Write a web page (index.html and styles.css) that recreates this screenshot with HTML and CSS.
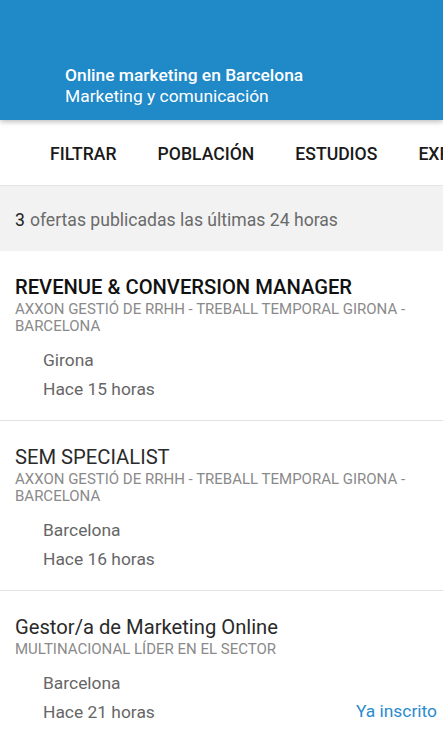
FILE: index.html
```html
<!DOCTYPE html>
<html lang="es">
<head>
  <meta charset="UTF-8">
  <meta name="viewport" content="width=device-width, initial-scale=1.0">
  <title>Ofertas</title>
  <link rel="stylesheet" href="styles.css">
</head>
<body>

<header class="top-bar">
  <div class="top-title">Online marketing en Barcelona</div>
  <div class="top-subtitle">Marketing y comunicación</div>
</header>

<nav class="tabs">
  <span class="tab">FILTRAR</span>
  <span class="tab">POBLACIÓN</span>
  <span class="tab">ESTUDIOS</span>
  <span class="tab">EXPERIENCIA</span>
</nav>

<div class="summary"><b>3</b> ofertas publicadas las últimas 24 horas</div>

<ul class="offers">
  <li class="offer">
    <div class="offer-title strong">REVENUE &amp; CONVERSION MANAGER</div>
    <div class="company">AXXON GESTIÓ DE RRHH - TREBALL TEMPORAL GIRONA - BARCELONA</div>
    <div class="meta">
      <div class="meta-line">Girona</div>
      <div class="meta-line">Hace 15 horas</div>
    </div>
  </li>
  <li class="offer">
    <div class="offer-title">SEM SPECIALIST</div>
    <div class="company">AXXON GESTIÓ DE RRHH - TREBALL TEMPORAL GIRONA - BARCELONA</div>
    <div class="meta">
      <div class="meta-line">Barcelona</div>
      <div class="meta-line">Hace 16 horas</div>
    </div>
  </li>
  <li class="offer">
    <div class="offer-title">Gestor/a de Marketing Online</div>
    <div class="company">MULTINACIONAL LÍDER EN EL SECTOR</div>
    <div class="meta">
      <div class="meta-line">Barcelona</div>
      <div class="meta-line with-status">Hace 21 horas <span class="status">Ya inscrito</span></div>
    </div>
  </li>
</ul>

</body>
</html>
```

FILE: styles.css
```css
* {
  box-sizing: border-box;
  margin: 0;
  padding: 0;
}

html, body {
  width: 100%;
  height: 100%;
  overflow: hidden;
  font-family: Roboto, "Liberation Sans", Arial, sans-serif;
  background: #fff;
  color: #222;
}

.top-bar {
  height: 120px;
  background: #2089c8;
  color: #fff;
  padding: 0 0 13px 65px;
  display: flex;
  flex-direction: column;
  justify-content: flex-end;
  position: relative;
  z-index: 2;
  box-shadow: 0 2px 5px rgba(0, 0, 0, 0.25);
}

.top-title {
  font-size: 17.4px;
  font-weight: 500;
  line-height: 21px;
}

.top-subtitle {
  font-size: 17.4px;
  line-height: 21px;
}

.tabs {
  height: 66px;
  display: flex;
  align-items: center;
  gap: 41px;
  padding-left: 50px;
  padding-top: 2px;
  white-space: nowrap;
  overflow: hidden;
  border-bottom: 1px solid #e4e4e4;
  font-size: 17.6px;
  font-weight: 500;
  color: #1a1a1a;
}

.summary {
  height: 65px;
  background: #f2f2f2;
  padding-left: 15px;
  padding-top: 2px;
  display: flex;
  align-items: center;
  font-size: 17.6px;
  color: #6a6a6a;
}

.summary b {
  font-weight: 400;
  color: #222;
  margin-right: 5px;
}

.offers {
  list-style: none;
}

.offer {
  padding: 24px 6px 16px 15px;
  border-bottom: 1px solid #e2e2e2;
}

.offer-title {
  font-size: 20.2px;
  line-height: 24px;
  color: #2a2a2a;
}

.offer-title.strong {
  font-weight: 500;
  color: #111;
}

.company {
  margin-top: 2px;
  font-size: 15px;
  line-height: 17px;
  color: #8a8a8a;
  text-transform: uppercase;
}

.meta {
  margin-top: 11px;
  padding-left: 28px;
  font-size: 17.4px;
  color: #666;
}

.meta-line {
  line-height: 29px;
}

.with-status {
  display: flex;
  justify-content: space-between;
}

.status {
  color: #2a8ccc;
  margin-top: -1px;
}
```
